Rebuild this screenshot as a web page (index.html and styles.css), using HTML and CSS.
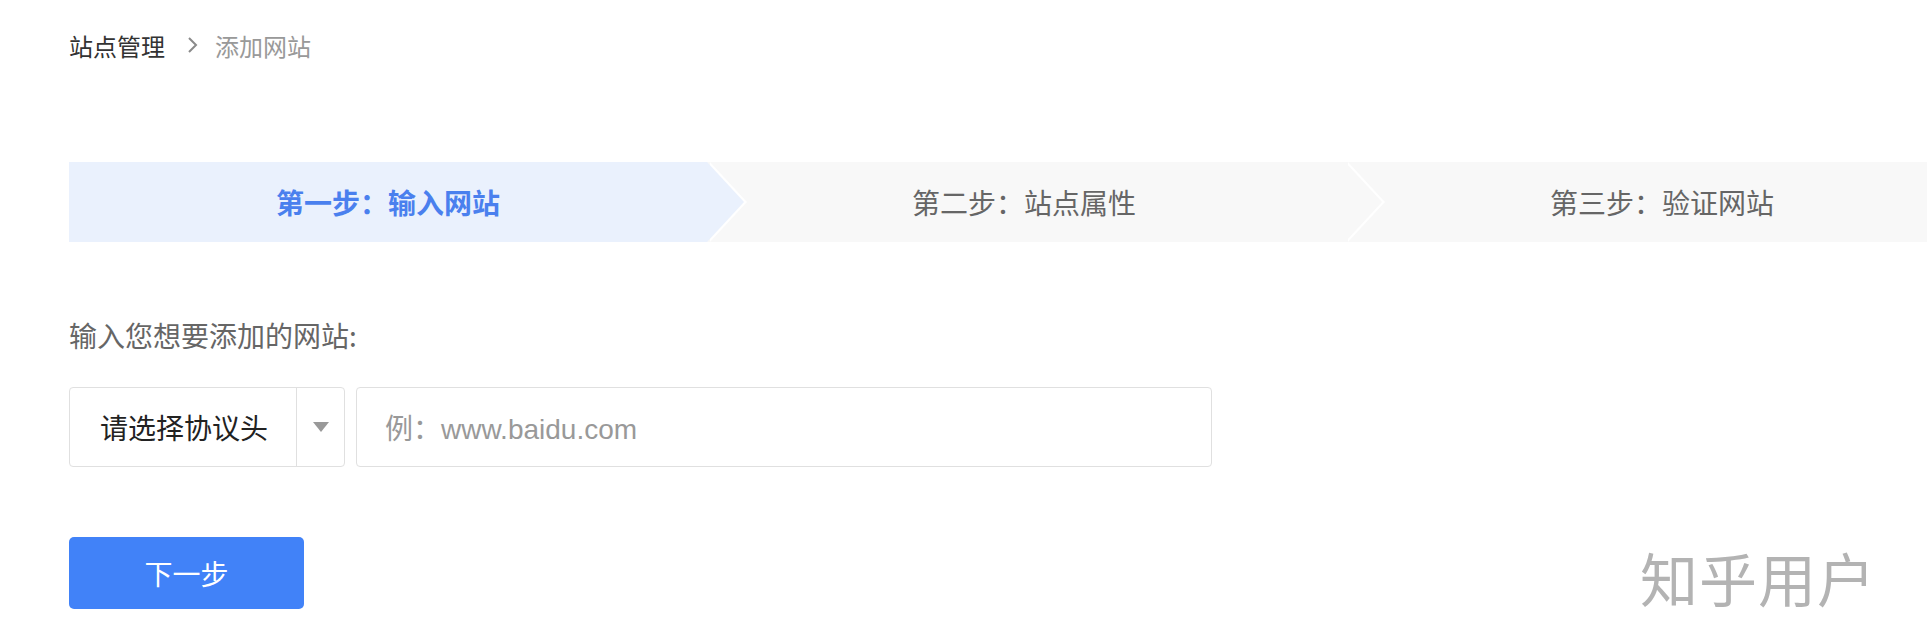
FILE: index.html
```html
<!DOCTYPE html>
<html lang="zh-CN">
<head>
<meta charset="utf-8">
<title>添加网站</title>
<link rel="stylesheet" href="styles.css">
</head>
<body>
<div class="page">
  <nav class="breadcrumb">
    <span class="crumb-link">站点管理</span>
    <svg class="crumb-sep" width="12" height="18" viewBox="0 0 12 18"><path d="M2 2 L9 9 L2 16" fill="none" stroke="#8a8a8a" stroke-width="2"/></svg>
    <span class="crumb-current">添加网站</span>
  </nav>

  <div class="steps">
    <div class="step step-active"><span>第一步：输入网站</span></div>
    <div class="step"><span>第二步：站点属性</span></div>
    <div class="step step-last"><span>第三步：验证网站</span></div>
  </div>

  <div class="field-label">输入您想要添加的网站:</div>

  <div class="form-row">
    <div class="select">
      <span class="select-text">请选择协议头</span>
      <span class="select-arrow"><svg width="16" height="10" viewBox="0 0 16 10"><path d="M0 0 H16 L8 10 Z" fill="#999"/></svg></span>
    </div>
    <div class="url-input"><span class="placeholder">例：www.baidu.com</span></div>
  </div>

  <button class="btn-next">下一步</button>

  <div class="watermark">知乎用户</div>
</div>
</body>
</html>
```

FILE: styles.css
```css
html, body {
  margin: 0;
  padding: 0;
  background: #ffffff;
}
body {
  font-family: "Noto Sans CJK SC", "Noto Sans", sans-serif;
  overflow: hidden;
}
.page {
  position: relative;
  width: 1927px;
  height: 643px;
  padding-left: 69px;
  box-sizing: border-box;
  overflow: hidden;
}
.breadcrumb {
  height: 90px;
  display: flex;
  align-items: center;
  font-size: 24px;
}
.crumb-link {
  color: #333333;
}
.crumb-sep {
  margin: 0 16px 0 22px;
}
.crumb-current {
  color: #999999;
}
.steps {
  margin-top: 72px;
  display: flex;
  width: 1914px;
  height: 80px;
}
.step {
  position: relative;
  flex: 0 0 638px;
  height: 80px;
  background: #f8f8f8;
  display: flex;
  align-items: center;
  justify-content: center;
  font-size: 28px;
  color: #666666;
}
.step span {
  position: relative;
  z-index: 3;
  margin-right: 4px;
}
.step::before,
.step::after {
  content: "";
  position: absolute;
  top: 0;
  width: 0;
  height: 0;
  border-top: 40px solid transparent;
  border-bottom: 40px solid transparent;
}
.step::before {
  left: calc(100% + 3px);
  border-left: 37px solid #ffffff;
  z-index: 1;
}
.step::after {
  left: 100%;
  border-left: 37px solid #f8f8f8;
  z-index: 2;
}
.step-last::before,
.step-last::after {
  display: none;
}
.step-active {
  background: #eaf1fd;
  color: #4a80ee;
  font-weight: bold;
}
.step-active span {
  margin-right: 0;
}
.step-active::after {
  border-left-color: #eaf1fd;
}
.field-label {
  margin-top: 73px;
  height: 40px;
  line-height: 40px;
  font-size: 28px;
  color: #666666;
}
.form-row {
  margin-top: 32px;
  display: flex;
  gap: 11px;
  height: 80px;
}
.select {
  width: 276px;
  box-sizing: border-box;
  border: 1px solid #e0e0e0;
  border-radius: 4px;
  display: flex;
  align-items: stretch;
}
.select-text {
  flex: 1;
  display: flex;
  align-items: center;
  padding-left: 30px;
  font-size: 28px;
  color: #222222;
  border-right: 1px solid #e0e0e0;
}
.select-arrow {
  width: 47px;
  display: flex;
  align-items: center;
  justify-content: center;
}
.url-input {
  width: 856px;
  box-sizing: border-box;
  border: 1px solid #e0e0e0;
  border-radius: 4px;
  display: flex;
  align-items: center;
  padding-left: 28px;
}
.placeholder {
  font-family: "Liberation Sans", "Noto Sans CJK SC", sans-serif;
  font-size: 28px;
  color: #999999;
}
.btn-next {
  display: block;
  margin-top: 70px;
  width: 235px;
  height: 72px;
  border: none;
  border-radius: 5px;
  background: #4182f8;
  color: #ffffff;
  font-family: "Noto Sans CJK SC", sans-serif;
  font-size: 28px;
  padding: 0;
}
.watermark {
  position: absolute;
  left: 1640px;
  top: 540px;
  font-size: 58px;
  line-height: 74px;
  color: #b3b3b3;
  letter-spacing: 1px;
}
```
